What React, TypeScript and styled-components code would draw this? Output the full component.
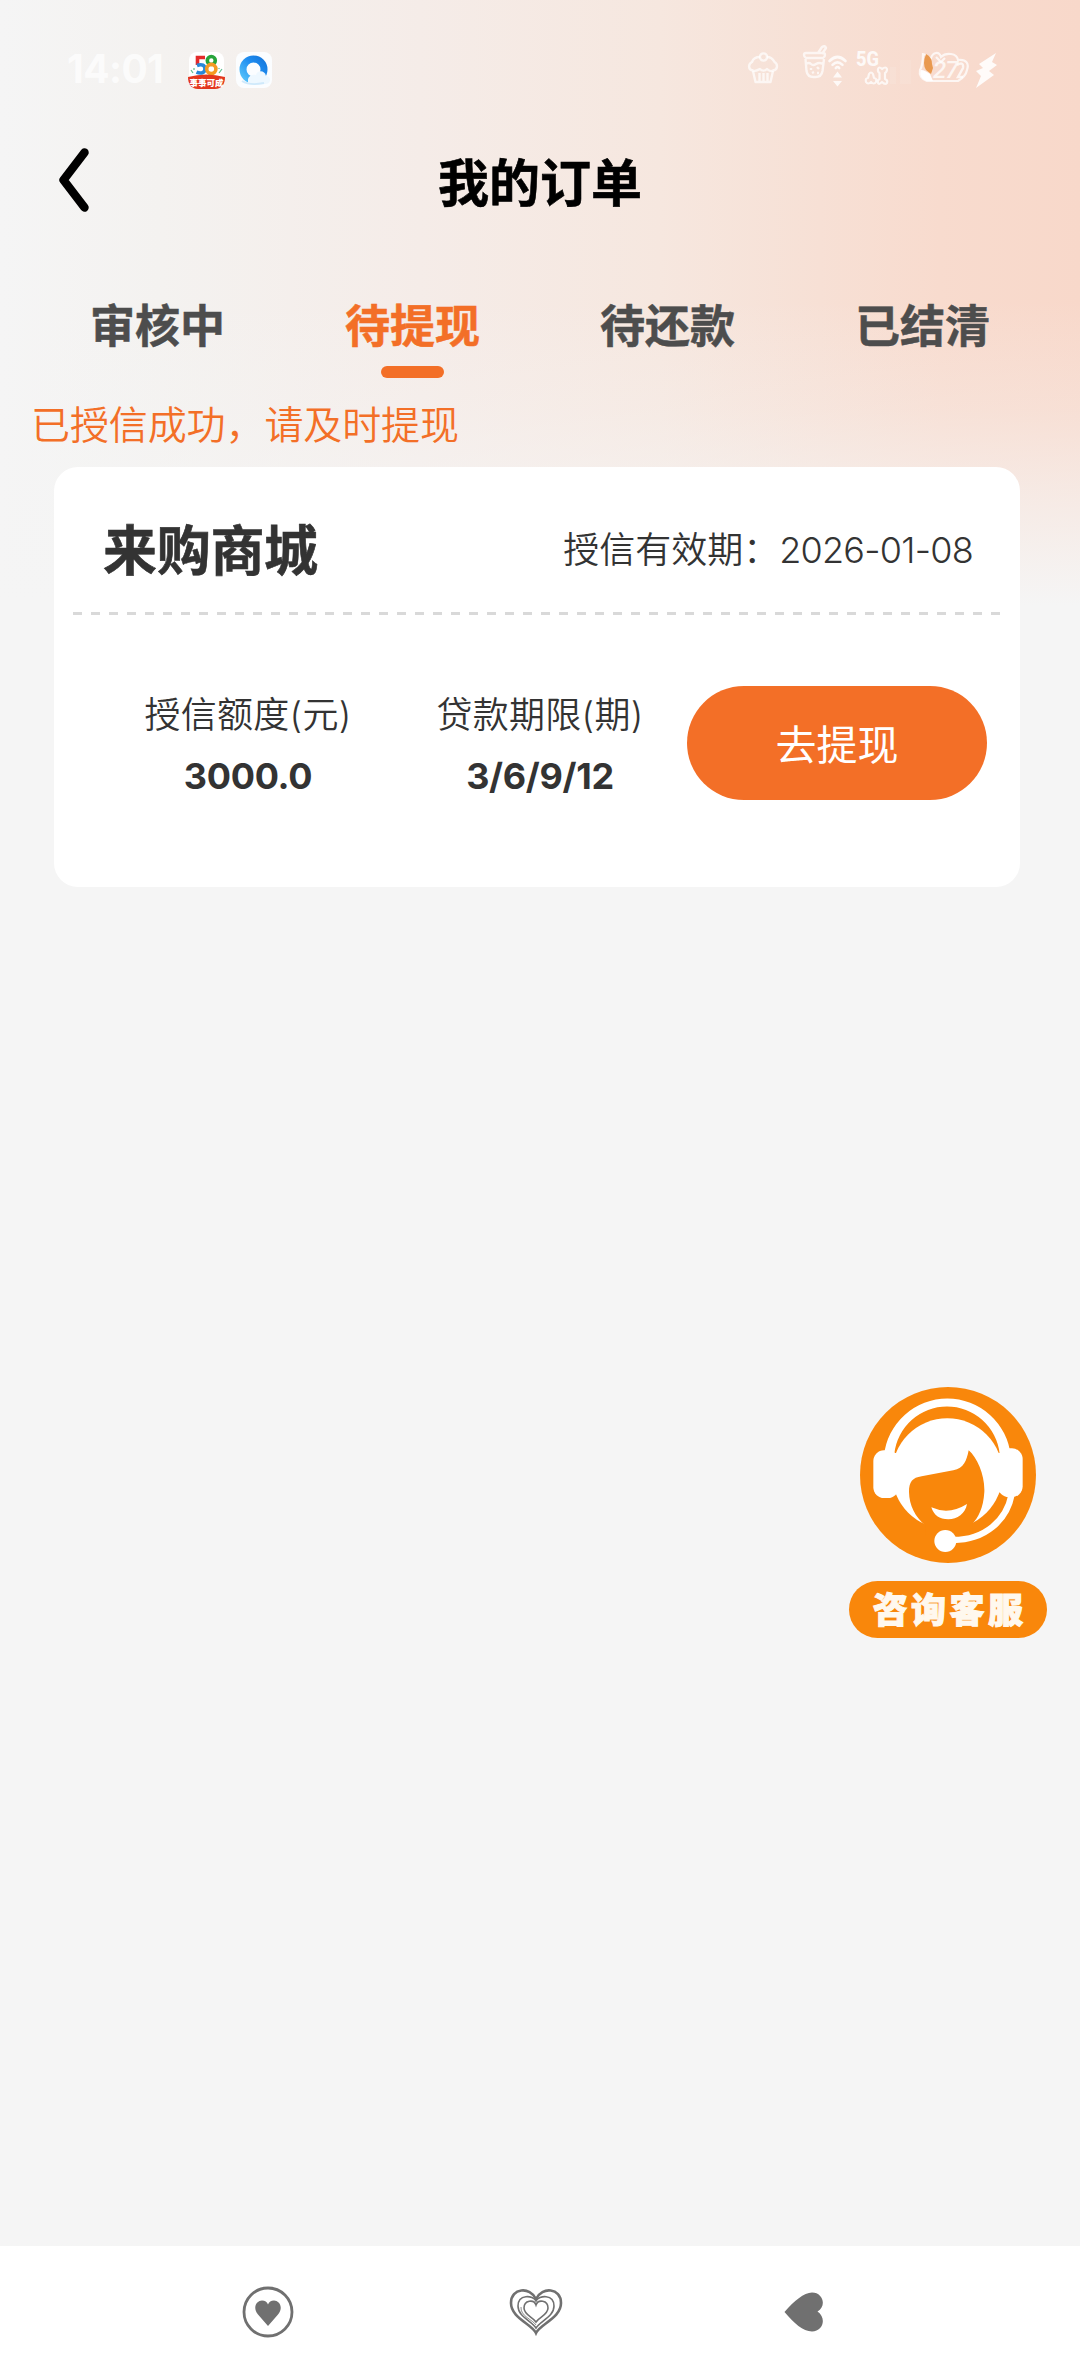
import React from 'react';
import styled, { createGlobalStyle } from 'styled-components';

const ORANGE = '#f36f27';

const GlobalStyle = createGlobalStyle`
  html, body { margin: 0; padding: 0; }
  body {
    background: #f5f5f5;
    font-family: Inter, "Noto Sans CJK SC", sans-serif;
    font-weight: 350;
    color: #333;
  }
  * { box-sizing: border-box; }
`;

const Page = styled.div`
  position: relative;
  width: 1080px;
  height: 2378px;
  display: flex;
  flex-direction: column;
  overflow: hidden;
  background:
    linear-gradient(to bottom, rgba(245, 245, 245, 0) 300px, rgba(245, 245, 245, 0.25) 410px, rgba(245, 245, 245, 0.62) 500px, #f5f5f5 605px),
    linear-gradient(to right, #f5f5f5 0, #f4f2f0 160px, #f5ece8 420px, #f6e7df 660px, #f7e0d5 820px, #f8dbce 940px, #f8d8ca 1080px);
`;

const StatusBar = styled.div`
  height: 102px;
  padding: 0 83px 0 67px;
  display: flex;
  align-items: flex-start;
  justify-content: space-between;
`;

const StatusGroup = styled.div`
  display: flex;
  align-items: flex-start;
`;

const Clock = styled.span`
  width: 121px;
  padding-top: 49px;
  font-size: 39px;
  line-height: 40px;
  font-weight: 700;
  letter-spacing: -0.6px;
  color: rgba(255, 255, 255, 0.72);
`;

const StatusIcon = styled.svg<{ $w: number; $h: number; $top: number; $left?: number }>`
  display: block;
  flex: none;
  width: ${(p) => p.$w}px;
  height: ${(p) => p.$h}px;
  margin-top: ${(p) => p.$top}px;
  margin-left: ${(p) => p.$left ?? 0}px;
  overflow: visible;
`;

const Header = styled.header`
  height: 160px;
  display: grid;
  grid-template-columns: 140px 1fr 140px;
  align-items: center;
`;

const BackButton = styled.button`
  display: flex;
  padding: 0 0 4px 56px;
  border: 0;
  background: none;
`;

const Title = styled.h1`
  margin: 0;
  padding-top: 3px;
  text-align: center;
  font-size: 51px;
  line-height: 60px;
  font-weight: 700;
  color: #000;
  -webkit-text-stroke: 0.6px #000;
`;

const Tabs = styled.nav`
  padding: 33px 30px 0;
  display: grid;
  grid-template-columns: repeat(4, 255px);
`;

const Tab = styled.div<{ $active?: boolean }>`
  height: 84px;
  display: flex;
  flex-direction: column;
  align-items: center;
  font-size: 45px;
  line-height: 63px;
  font-weight: 700;
  color: ${(p) => (p.$active ? ORANGE : '#4d4d4d')};
  -webkit-text-stroke: 0.5px currentColor;

  &::after {
    content: '';
    width: 63px;
    height: 12px;
    margin-top: 8px;
    border-radius: 6px;
    background: ${(p) => (p.$active ? ORANGE : 'transparent')};
  }
`;

const Notice = styled.p`
  margin: 20px 0 0 31px;
  font-size: 39px;
  line-height: 51px;
  letter-spacing: -0.1px;
  color: ${ORANGE};
`;

const Card = styled.section`
  width: 966px;
  height: 420px;
  margin: 17px 0 0 54px;
  border-radius: 24px;
  background: #fff;
`;

const CardHead = styled.div`
  height: 145px;
  padding: 20px 47px 0 49px;
  display: flex;
  align-items: center;
  justify-content: space-between;
`;

const ShopName = styled.h2`
  margin: 0;
  padding-top: 4px;
  font-size: 54px;
  line-height: 64px;
  font-weight: 700;
  letter-spacing: -0.3px;
  -webkit-text-stroke: 0.6px #333;
`;

const Validity = styled.div`
  display: flex;
  font-size: 36px;
  line-height: 48px;
`;

const DateText = styled.span`
  font-size: 36px;
  letter-spacing: -0.75px;
`;

const Divider = styled.div`
  height: 3px;
  margin: 0 18px 0 19px;
  background: repeating-linear-gradient(to right, #d9d9d9 0 9px, transparent 9px 18px);
`;

const CardBody = styled.div`
  padding-left: 48px;
  display: flex;
  align-items: flex-start;
`;

const Stat = styled.div`
  width: 292px;
  padding-top: 76px;
  text-align: center;
  font-size: 36px;
  line-height: 48px;
  letter-spacing: 0.3px;
`;

const StatValue = styled.div`
  margin-top: 13px;
  font-weight: 700;
  letter-spacing: -0.3px;
`;

const WithdrawButton = styled.button`
  width: 300px;
  height: 114px;
  margin: 71px 0 0 1px;
  padding: 3px 0 0;
  border: 0;
  border-radius: 57px;
  background: ${ORANGE};
  color: #fff;
  font-family: inherit;
  font-size: 41px;
  font-weight: 400;
  line-height: 60px;
`;

const Support = styled.aside`
  position: absolute;
  top: 1387px;
  left: 849px;
  width: 198px;
  display: flex;
  flex-direction: column;
  align-items: center;
  gap: 18px;
`;

const SupportLabel = styled.div`
  width: 198px;
  height: 57px;
  border-radius: 29px;
  background: #f9870b;
  color: #fff8ee;
  text-align: center;
  font-size: 35px;
  line-height: 59px;
  font-weight: 900;
  letter-spacing: 3.4px;
  text-indent: 3px;
  -webkit-text-stroke: 1px #fff8ee;
`;

const NavBar = styled.footer`
  height: 132px;
  margin-top: auto;
  padding-left: 134px;
  display: grid;
  grid-template-columns: repeat(3, 268px);
  align-items: center;
  justify-items: center;
  background: #fff;
`;

const TABS = ['审核中', '待提现', '待还款', '已结清'];
const STATS = [
  { label: '授信额度(元)', value: '3000.0' },
  { label: '贷款期限(期)', value: '3/6/9/12' },
];

const App58 = () => (
  <StatusIcon $w={37} $h={37} $top={52} viewBox="0 0 37 37">
    <rect x="1" y="0" width="35" height="36" rx="8" fill="#fff" />
    <g fill="none" strokeWidth="3.6">
      <path d="M17 5.5H9.5V13" stroke="#e32a2a" />
      <path d="M9 13.500c5-2 8 0 8 3.600s-4 5-8.500 3" stroke="#2788d8" />
      <circle cx="23.300" cy="8.500" r="4" stroke="#27a43a" />
      <circle cx="23.300" cy="17" r="4.600" stroke="#f59a22" />
    </g>
    <path d="M3 18l2 3M6 16v2M34 17l-3 4M31 16v1" stroke="#5cbf8d" strokeWidth="1.200" />
    <path d="M0 25q18-5 37 0c0 7-3 12-10 12H10C3 37 0 32 0 25z" fill="#e3371e" />
    <text x="18.500" y="34" textAnchor="middle" fontSize="8.500" fontWeight="900" fill="#fff" fontFamily="Noto Sans CJK SC">事事可成</text>
  </StatusIcon>
);

const BrowserIcon = () => (
  <StatusIcon $w={36} $h={36} $top={52} $left={11} viewBox="0 0 36 36">
    <defs>
      <linearGradient id="ring" x1="0" y1="1" x2="1" y2="0">
        <stop offset="0" stopColor="#56c3fa" />
        <stop offset="0.600" stopColor="#1e8df0" />
        <stop offset="1" stopColor="#1678dd" />
      </linearGradient>
    </defs>
    <rect width="36" height="36" rx="8" fill="#fbfdff" />
    <circle cx="17.500" cy="17.500" r="10.500" fill="none" stroke="url(#ring)" strokeWidth="7" />
    <path d="M12 32h18c6-1 5-8 0-8-1-6-9-6-10-1-4-1-7 1-8 4z" fill="#eef8ff" />
    <path d="M6 29q8 5 22 2" stroke="#cfe9fb" strokeWidth="2" fill="none" />
  </StatusIcon>
);

const Cupcake = () => (
  <StatusIcon $w={30} $h={32} $top={52} viewBox="0 0 30 32" fill="none" stroke="#fff" strokeOpacity="0.700" strokeWidth="2.400" strokeLinejoin="round">
    <circle cx="15.500" cy="5" r="3.600" />
    <path d="M12 5C7 5 5 7 4 10C0 12 0 18 5 18.500C8 20 11 17 12 17C14 19 17 19 19 17C20 18 23 20 25 18.500C30 18 30 12 26.500 10C25 7 23 5 19 5" />
    <path d="M5 19l2.500 11h15l2.500-11M11.500 21v8M15.500 21v8M19.500 21v8" />
  </StatusIcon>
);

const DrinkIcon = () => (
  <StatusIcon $w={24} $h={33} $top={45} $left={25} viewBox="0 0 24 33" fill="none" stroke="#fff" strokeOpacity="0.700" strokeWidth="2.400" strokeLinejoin="round">
    <path d="M1 10q0-2 2-2h17q2 0 2 2t-2 3H3q-2-1-2-3zM2.500 14l1 12q1 6 7 6h2q6 0 7-6l1.500-12M15 8l4-6q3-2 4 1l-4 6M3 19q3-2 5 0t5 0 7 0" />
    <path d="M8 23v2M14 22l2 2M9 28l2-1M14 28h2" />
  </StatusIcon>
);

const WifiIcon = () => (
  <StatusIcon $w={19} $h={32} $top={55} $left={1} viewBox="0 0 19 32" fill="none" stroke="#fff" strokeOpacity="0.800" strokeWidth="2.600" strokeLinecap="round">
    <path d="M1.500 6q8-8 16 0M4.500 9.800q5-5 10 0M7.800 13q1.700-2 3.400 0" />
    <path d="M5 22.500h9l-4.500-6zM5 26h9l-4.500 5.500z" fill="#fff" fillOpacity="0.800" stroke="none" />
  </StatusIcon>
);

const SignalIcon = () => (
  <StatusIcon $w={58} $h={35} $top={50} $left={10} viewBox="0 0 58 35">
    <text x="-1" y="16" fontSize="20.500" fontWeight="800" fontFamily="Roboto" fill="#fff" fillOpacity="0.850" textLength="23" lengthAdjust="spacingAndGlyphs">5G</text>
    <g fill="none" stroke="#fff" strokeOpacity="0.750" strokeWidth="2.200" strokeLinejoin="round">
      <path d="M9 32q-1-4 2-4l1-4q2-3 4 0l1 4q3 0 2 4-2 3-5 0-3 3-5 0z" />
      <path d="M21 19q1-3 4 0 4-3 5 0 0 3-2 4v6q3 1 2 4-2 2-5-1-3 3-4 1-1-3 1.500-4v-6q-2-1-1.500-4z" />
    </g>
    <path d="M33 17h6v17h-6zM43 10h11v24H43z" fill="#fff" fillOpacity="0.100" />
  </StatusIcon>
);

const BatteryIcon = () => (
  <StatusIcon $w={52} $h={32} $top={52} $left={4} viewBox="0 0 52 32">
    <g fill="none" stroke="#fff" strokeOpacity="0.750" strokeWidth="2.200">
      <path d="M4 2c4 0 4 5 8 4 2-6 8-7 10-1 5-5 16-4 17 3 9-1 11 4 9 10-1 5-4 8-9 11H8c-5-2-8-6-7-11 3-5 3-10 3-16z" />
      <path d="M17 5l5 5 4-4" />
    </g>
    <path d="M2 18c3 0 6 2 9 4l3 7H7c-6-3-6-7-5-11z" fill="#fff" />
    <path d="M7 2q6 3 6 10l1 4-2 6-5-4q-4-6 0-16z" fill="#e9994f" />
    <text x="14" y="26" fontSize="24" fontWeight="500" fontStyle="italic" fontFamily="Roboto" fill="#fff" fillOpacity="0.750" letterSpacing="-1">27</text>
    <path d="M38 13q7-4 6 3l-5 9h5" fill="none" stroke="#fff" strokeOpacity="0.750" strokeWidth="2.400" />
  </StatusIcon>
);

const BoltIcon = () => (
  <StatusIcon $w={21} $h={35} $top={53} $left={5} viewBox="0 0 21 35">
    <path d="M20 0L3 11l4 4-7 3 5 5-5 12 18-13-5-4 8-6-5-3z" fill="#fff" fillOpacity="0.880" />
  </StatusIcon>
);

const SupportFace = () => (
  <svg width="176" height="176" viewBox="90 50 528 528">
    <circle cx="354" cy="314" r="264" fill="#f9870b" />
    <path d="M162 256A191 191 0 0 1 542 256L509 250A159 159 0 0 0 193 250z" fill="#fff" />
    <circle cx="352" cy="310" r="166" fill="#fff" />
    <path
      d="M287 466C255 440 238 405 237 365C237 335 247 322 275 318L370 300C402 294 410 270 416 240C442 262 465 315 463 365C460 415 445 440 427 461L430 500H285z"
      fill="#f9870b"
    />
    <rect x="130" y="240" width="76" height="143" rx="32" fill="#fff" />
    <rect x="504" y="234" width="74" height="146" rx="32" fill="#fff" />
    <rect x="166" y="248" width="50" height="118" fill="#fff" />
    <rect x="490" y="248" width="50" height="118" fill="#fff" />
    <path d="M545 372C530 450 465 509 370 509" fill="none" stroke="#fff" strokeWidth="19" />
    <circle cx="346" cy="512" r="33" fill="#fff" />
    <path d="M304 411Q357 435 411 401C406 430 382 447 355 447C328 447 311 434 304 411z" fill="#fff" />
  </svg>
);

export default function App() {
  return (
    <>
      <GlobalStyle />
      <Page>
        <StatusBar>
          <StatusGroup>
            <Clock>14:01</Clock>
            <App58 />
            <BrowserIcon />
          </StatusGroup>
          <StatusGroup>
            <Cupcake />
            <DrinkIcon />
            <WifiIcon />
            <SignalIcon />
            <BatteryIcon />
            <BoltIcon />
          </StatusGroup>
        </StatusBar>

        <Header>
          <BackButton aria-label="返回">
            <svg width="36" height="68" viewBox="0 0 36 68">
              <path d="M28.500 6.500L7.500 34L28.500 61.500" fill="none" stroke="#000" strokeWidth="8.500" strokeLinecap="round" strokeLinejoin="round" />
            </svg>
          </BackButton>
          <Title>我的订单</Title>
        </Header>

        <Tabs>
          {TABS.map((name, i) => (
            <Tab key={name} $active={i === 1}>
              {name}
            </Tab>
          ))}
        </Tabs>

        <Notice>已授信成功，请及时提现</Notice>

        <Card>
          <CardHead>
            <ShopName>来购商城</ShopName>
            <Validity>
              授信有效期：<DateText>2026-01-08</DateText>
            </Validity>
          </CardHead>
          <Divider />
          <CardBody>
            {STATS.map((s) => (
              <Stat key={s.label}>
                {s.label}
                <StatValue>{s.value}</StatValue>
              </Stat>
            ))}
            <WithdrawButton>去提现</WithdrawButton>
          </CardBody>
        </Card>

        <Support>
          <SupportFace />
          <SupportLabel>咨询客服</SupportLabel>
        </Support>

        <NavBar>
          <svg width="52" height="52" viewBox="0 0 52 52">
            <circle cx="26" cy="26" r="24" fill="none" stroke="#707070" strokeWidth="2.800" />
            <path d="M26 40L16 28.500C10 21 15 14.500 20 14.500Q24.500 14.500 26 18.500Q27.500 14.500 32 14.500C37 14.500 42 21 36 28.500z" fill="#707070" />
          </svg>
          <svg width="54" height="48" viewBox="0 0 54 48" fill="none" stroke="#707070">
            <path d="M27 45C23 36 2 30 2 15C2 0 21-2 27 11C33-2 52 0 52 15C52 30 31 36 27 45z" strokeWidth="2.600" />
            <path d="M27 40C23 33 9 29 9 18C9 6 24 7 27 13C30 7 45 6 45 18C45 29 31 33 27 40z" strokeWidth="1.600" />
            <path d="M27 37C24 32 11 28 12 19" strokeWidth="0.800" />
            <path d="M27 34C24 29 15 27 15 20C15 12 25 11 27 17C29 11 39 12 39 20C39 27 30 29 27 34z" strokeWidth="1.600" />
          </svg>
          <svg width="40" height="40" viewBox="0 0 40 40">
            <path d="M0.500 20C10 9 20 0.500 28 0.500C39 0.500 43 14 33.500 19.500C43 26 39 39.500 28 39.500C19 39.500 10 31 0.500 20z" fill="#707070" />
          </svg>
        </NavBar>
      </Page>
    </>
  );
}
